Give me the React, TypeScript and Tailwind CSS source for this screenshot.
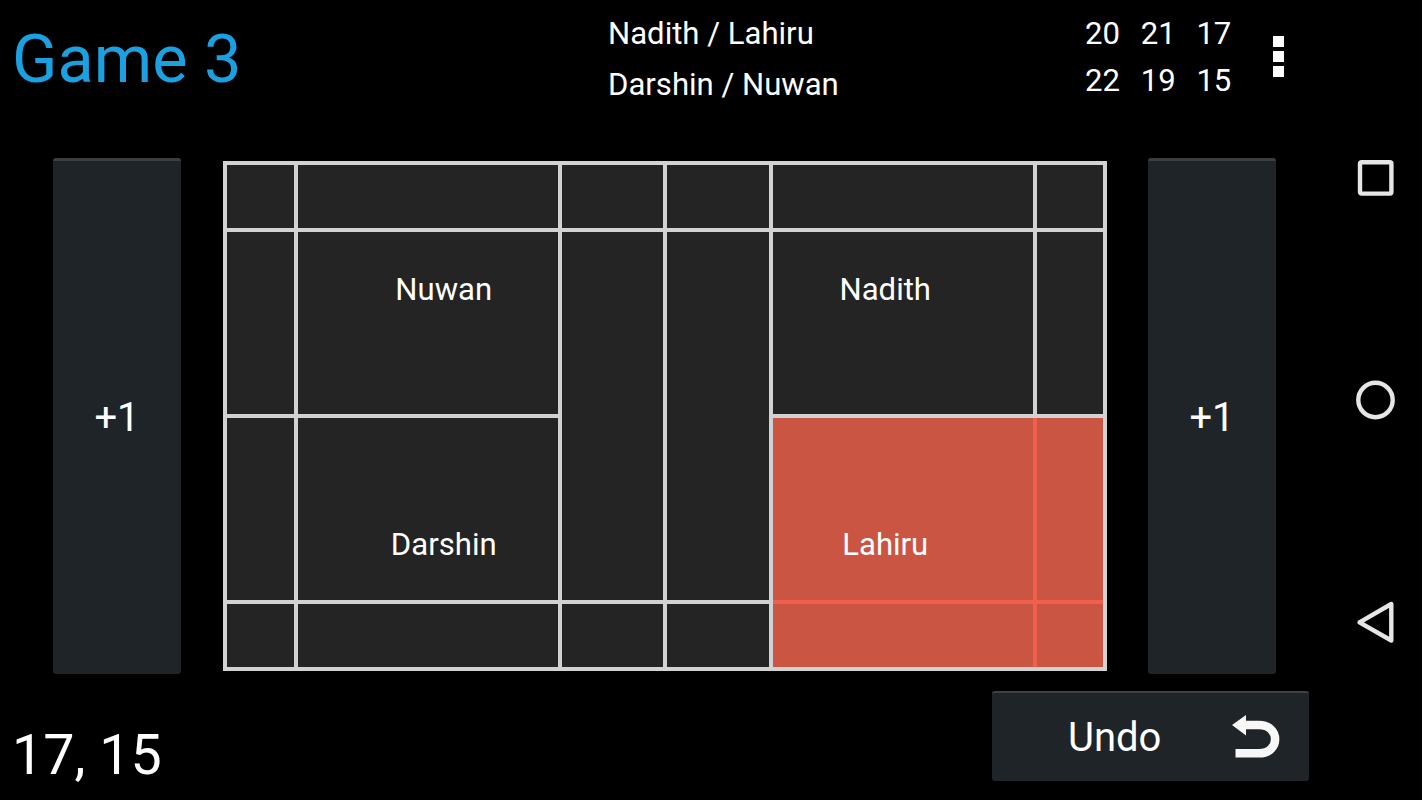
import React from 'react';

const teams = [
  { name: 'Nadith / Lahiru', scores: [20, 21, 17] },
  { name: 'Darshin / Nuwan', scores: [22, 19, 15] }
];

const players = ['Nuwan', 'Nadith', 'Darshin', 'Lahiru'];

const PointButton: React.FC = () => (
  <button className="w-32 h-[516px] rounded-[3px] bg-[#1f2428] border-t-[3px] border-[#3a3f43] pt-[1px] text-[40px] leading-none text-white">
    +1
  </button>
);

const Header: React.FC = () => (
  <header className="flex h-[158px] pl-3">
    <h1 className="w-[596px] pt-[19px] text-[66.7px] leading-[80px] text-[#1ba1e2]">Game 3</h1>
    <div className="w-[477px] pt-[8px] text-[31.1px] leading-[51px]">
      {teams.map((team) => (
        <p key={team.name}>{team.name}</p>
      ))}
    </div>
    <div className="w-[188px] pt-[11px] text-[31.1px] leading-[46.5px]">
      {teams.map((team) => (
        <div key={team.name} className="flex">
          {team.scores.map((score, index) => (
            <span key={index} className="w-[55.7px]">{score}</span>
          ))}
        </div>
      ))}
    </div>
    <button className="flex flex-col gap-1 pt-[36px]">
      <span className="h-[11px] w-[11px] bg-white" />
      <span className="h-[11px] w-[11px] bg-white" />
      <span className="h-[11px] w-[11px] bg-white" />
    </button>
  </header>
);

const Court: React.FC = () => (
  <div className="relative mt-[3px] h-[510px] w-[884px]">
    <div className="grid h-full grid-cols-[67px_260px_101px_102px_260px_66px] grid-rows-[63px_182px_182px_63px] gap-1 bg-[#d0d2d3] p-1">
      <div className="bg-[#242424]" />
      <div className="bg-[#242424]" />
      <div className="bg-[#242424]" />
      <div className="bg-[#242424]" />
      <div className="bg-[#242424]" />
      <div className="bg-[#242424]" />

      <div className="bg-[#242424]" />
      <div className="bg-[#242424]" />
      <div className="row-span-2 bg-[#242424]" />
      <div className="row-span-2 bg-[#242424]" />
      <div className="bg-[#242424]" />
      <div className="bg-[#242424]" />

      <div className="bg-[#242424]" />
      <div className="bg-[#242424]" />
      {/* serving side */}
      <div className="col-span-2 row-span-2 grid grid-cols-[260px_66px] grid-rows-[182px_63px] gap-1 bg-[#f0604d]">
        <div className="bg-[#cb5543]" />
        <div className="bg-[#cb5543]" />
        <div className="bg-[#cb5543]" />
        <div className="bg-[#cb5543]" />
      </div>

      <div className="bg-[#242424]" />
      <div className="bg-[#242424]" />
      <div className="bg-[#242424]" />
      <div className="bg-[#242424]" />
    </div>
    <div className="absolute inset-0 grid grid-cols-2 grid-rows-[254px_256px] place-items-center pr-[1px] pt-[2px] text-[31.1px] leading-none">
      {players.map((player) => (
        <span key={player}>{player}</span>
      ))}
    </div>
  </div>
);

const Footer: React.FC = () => (
  <footer className="flex justify-between pl-3 pr-5 pt-[17px]">
    <p className="pt-[24px] text-[55.6px] leading-[80px]">17, 15</p>
    <button className="flex h-[90px] w-[317px] items-center rounded-[3px] bg-[#1f2428] border-t-2 border-[#3f4245] pl-[76px] text-[40px] leading-none">
      <span className="w-[162px] pt-[2px] text-left">Undo</span>
      <svg width="50" height="46" viewBox="0 0 50 46" fill="none">
        <path d="M12 11H29C50.500 11 50.500 39.300 29 39.300H5.500" stroke="#f7f7f7" strokeWidth="8.500" />
        <path d="M2 11L16 1V21.500Z" fill="#f7f7f7" />
      </svg>
    </button>
  </footer>
);

const NavBar: React.FC = () => (
  <nav className="flex w-[93px] flex-col items-center justify-between pb-[156px] pt-[156px]">
    <svg width="44" height="44" viewBox="0 0 44 44" fill="none" stroke="#e6e6e6" strokeWidth="4.4">
      <rect x="6" y="6.200" width="31.400" height="31.400" rx="1.500" />
    </svg>
    <svg width="44" height="44" viewBox="0 0 44 44" fill="none" stroke="#e6e6e6" strokeWidth="4.4">
      <circle cx="21.500" cy="22" r="17.200" />
    </svg>
    <svg width="44" height="44" viewBox="0 0 44 44" fill="none" stroke="#e6e6e6" strokeWidth="4.400" strokeLinejoin="round">
      <path d="M37.300 4V40.500L5.500 22.300Z" />
    </svg>
  </nav>
);

const App: React.FC = () => {
  return (
    <div className="flex h-[800px] w-[1422px] overflow-hidden bg-black font-[Roboto,sans-serif] text-white">
      <main className="w-[1329px]">
        <Header />
        <div className="flex h-[516px] pl-[53px]">
          <PointButton />
          <div className="ml-[42px] mr-[41px]">
            <Court />
          </div>
          <PointButton />
        </div>
        <Footer />
      </main>
      <NavBar />
    </div>
  );
};

export default App;
